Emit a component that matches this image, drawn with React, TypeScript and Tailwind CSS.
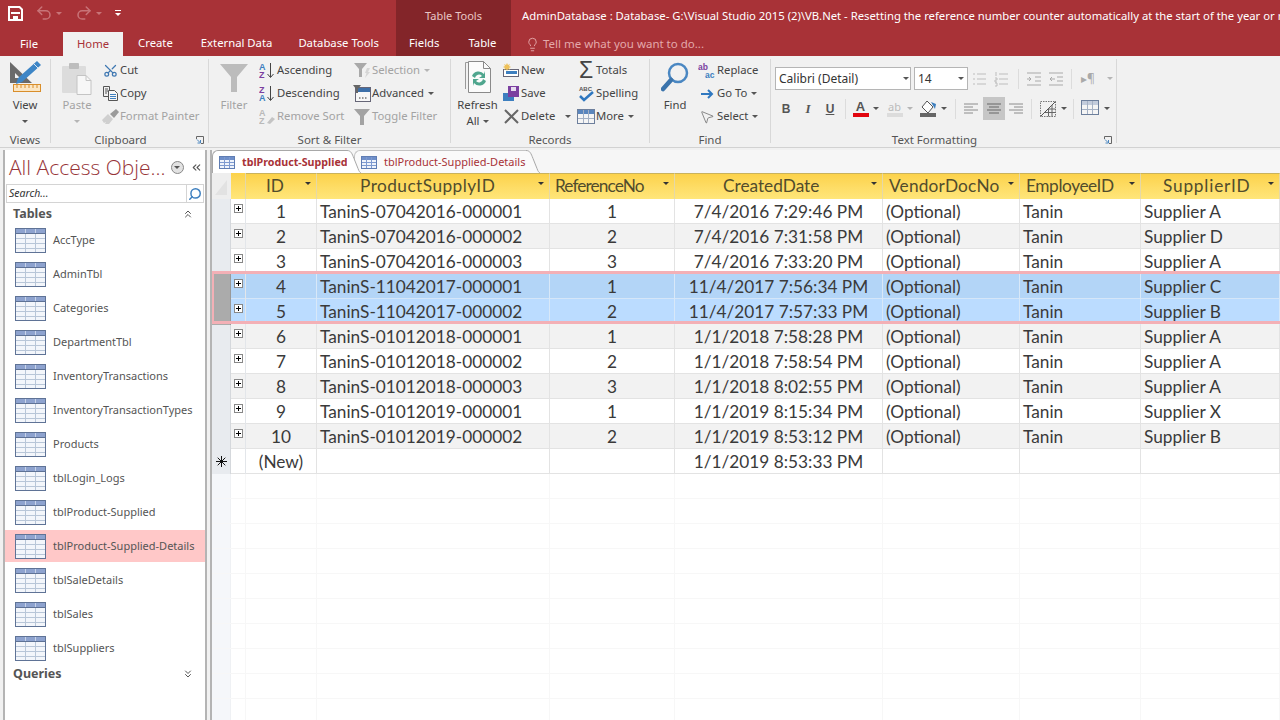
import React from "react";
import { ChevronsDown, ChevronsLeft, ChevronsUp, Lightbulb, MousePointer2, Redo2, Scissors, Search, Undo2 } from "lucide-react";

const rows = [
  ["1", "TaninS-07042016-000001", "1", "7/4/2016 7:29:46 PM", "Supplier A"],
  ["2", "TaninS-07042016-000002", "2", "7/4/2016 7:31:58 PM", "Supplier D"],
  ["3", "TaninS-07042016-000003", "3", "7/4/2016 7:33:20 PM", "Supplier A"],
  ["4", "TaninS-11042017-000001", "1", "11/4/2017 7:56:34 PM", "Supplier C"],
  ["5", "TaninS-11042017-000002", "2", "11/4/2017 7:57:33 PM", "Supplier B"],
  ["6", "TaninS-01012018-000001", "1", "1/1/2018 7:58:28 PM", "Supplier A"],
  ["7", "TaninS-01012018-000002", "2", "1/1/2018 7:58:54 PM", "Supplier A"],
  ["8", "TaninS-01012018-000003", "3", "1/1/2018 8:02:55 PM", "Supplier A"],
  ["9", "TaninS-01012019-000001", "1", "1/1/2019 8:15:34 PM", "Supplier X"],
  ["10", "TaninS-01012019-000002", "2", "1/1/2019 8:53:12 PM", "Supplier B"],
];

const tables = [
  "AccType",
  "AdminTbl",
  "Categories",
  "DepartmentTbl",
  "InventoryTransactions",
  "InventoryTransactionTypes",
  "Products",
  "tblLogin_Logs",
  "tblProduct-Supplied",
  "tblProduct-Supplied-Details",
  "tblSaleDetails",
  "tblSales",
  "tblSuppliers",
];

const headers = [
  { label: "ID", className: "pl-[20px]" },
  { label: "ProductSupplyID", className: "pl-[43px] tracking-[0.45px]" },
  { label: "ReferenceNo", className: "pl-[5px] tracking-[-0.9px]" },
  { label: "CreatedDate", className: "pl-[48px]" },
  { label: "VendorDocNo", className: "pl-[6px] tracking-[0.2px]" },
  { label: "EmployeeID", className: "pl-[6px] tracking-[-0.4px]" },
  { label: "SupplierID", className: "pl-[22px] tracking-[0.8px]" },
];

const gridCols = "grid grid-cols-[19px_15px_71px_233px_125px_208px_137px_121px_139px]";

function Caret({ faded }: { faded?: boolean }) {
  return (
    <span
      className={`inline-block w-0 h-0 border-x-[3px] border-t-[3px] border-x-transparent ${
        faded ? "border-t-[#b5b5b5]" : "border-t-[#555]"
      }`}
    />
  );
}

function TableIcon({ small }: { small?: boolean }) {
  if (small) {
    return (
      <svg width="16" height="13" viewBox="0 0 16 13" className="shrink-0">
        <rect x="0.5" y="0.5" width="15" height="12" fill="#eef3fb" stroke="#5f7db3" />
        <rect x="1" y="1" width="14" height="3" fill="#6f8fc9" />
        <path d="M1 6.5h14M1 9.5h14M5.5 1v11M10.5 1v11" stroke="#7d9ad0" strokeWidth="1" />
      </svg>
    );
  }
  return (
    <svg width="31" height="25" viewBox="0 0 31 25" className="shrink-0">
      <rect x="0.5" y="0.5" width="30" height="24" fill="#f3f6fb" stroke="#5f7396" />
      <rect x="1" y="1" width="29" height="4" fill="#8ea3cf" />
      <path d="M1 5.5h29" stroke="#5f7396" />
      <path d="M1 10.5h29M1 15.5h29M1 20.5h29M10.5 6v18M20.5 6v18" stroke="#b8c6d8" />
      <path d="M10.5 1v4M20.5 1v4" stroke="#c9d4e8" />
    </svg>
  );
}

function ViewIcon() {
  return (
    <svg width="32" height="32" viewBox="0 0 32 32">
      <path d="M1 1v21h22z" fill="#6a6a6a" />
      <path d="M6 12v5h5z" fill="#f1f1f1" />
      <path d="M8 20l4 0-3 2z M28 0l4 4-19 17-6 2 2-6z" fill="#3d85c6" />
      <path d="M25 3l4 4" stroke="#dce9f5" />
      <rect x="4.5" y="23.5" width="27" height="7" fill="#fbe6c4" stroke="#d98e2b" />
      <path d="M8 24v3M12 24v3M16 24v3M20 24v3M24 24v3M28 24v3" stroke="#d98e2b" />
    </svg>
  );
}

function PasteIcon() {
  return (
    <svg width="30" height="32" viewBox="0 0 30 32" className="mt-[2px]">
      <rect x="0" y="3" width="24" height="27" rx="1" fill="#dcdcdc" />
      <rect x="7" y="0" width="10" height="6" rx="1" fill="#bdbdbd" />
      <path d="M15 12.5h9l5 5v14H15z" fill="#f7f7f7" stroke="#c4c4c4" />
      <path d="M24 12.5v5h5" fill="none" stroke="#c4c4c4" />
    </svg>
  );
}

function CopyIcon() {
  return (
    <svg width="15" height="15" viewBox="0 0 15 15" fill="none" stroke="#555">
      <path d="M.5.5h6v10h-6zM2 3h3M2 5h3M2 7h2" />
      <path d="M5.5 4.5h6l3 3v7h-9z" fill="#f6f6f6" />
      <path d="M7 8.5h6M7 10.5h6M7 12.5h6" stroke="#3d7fbf" />
    </svg>
  );
}

function BrushIcon() {
  return (
    <svg width="17" height="15" viewBox="0 0 17 15">
      <path d="M0 11l6-6 5 5-4 5H3l1-2-2 1z" fill="#cfcfcf" />
      <path d="M8 5l6-5 3 3-5 6z" fill="#9a9a9a" />
    </svg>
  );
}

function Funnel({ color, w = 16 }: { color: string; w?: number }) {
  return (
    <svg width={w} height={w} viewBox="0 0 16 16">
      <path d="M0 0h16L10 7v9H6V7z" fill={color} />
    </svg>
  );
}

function BigFunnel() {
  return (
    <svg width="28" height="28" viewBox="0 0 28 28" className="mt-[3px]">
      <path d="M0 0h28L17 13v15h-6V13z" fill="#bcbcbc" />
    </svg>
  );
}

function SelectionIcon() {
  return (
    <svg width="17" height="16" viewBox="0 0 17 16">
      <path d="M0 0h13L8 6v8H5V6z" fill="#a9a9a9" />
      <path d="M13 5l3 0-2 4h2l-5 6 1.500-5h-1.500z" fill="#d6d6d6" />
    </svg>
  );
}

function AdvancedIcon() {
  return (
    <svg width="18" height="17" viewBox="0 0 18 17">
      <rect x="2.500" y="2.500" width="15" height="14" fill="#f7f7f7" stroke="#667" />
      <rect x="3" y="3" width="14" height="4" fill="#3d6fa8" />
      <path d="M6 13h1.500M9 13h1.500M12 13h1.500" stroke="#333" />
      <path d="M0 0h8L5 4v4H3V4z" fill="#666" />
    </svg>
  );
}

function SortIcon({ top, bottom, faded }: { top: string; bottom: string; faded?: boolean }) {
  const topColor = faded ? "#b9b9b9" : top === "A" ? "#3d7fbf" : "#7b3fa0";
  const bottomColor = faded ? "#b9b9b9" : top === "A" ? "#7b3fa0" : "#3d7fbf";
  return (
    <svg width="16" height="17" viewBox="0 0 16 17">
      <text x="0" y="7.5" fontSize="9" fontWeight="700" fontFamily="Liberation Sans" fill={topColor}>{top}</text>
      <text x="0" y="16" fontSize="9" fontWeight="700" fontFamily="Liberation Sans" fill={bottomColor}>{bottom}</text>
      {faded ? (
        <path d="M8 15l5-6 3 2-5 5z" fill="#c4c4c4" />
      ) : (
        <path d="M11.5 1v14M8.5 12l3 3.5 3-3.5" fill="none" stroke="#444" />
      )}
    </svg>
  );
}

function MiniTable({ header = "#7f9ccf" }: { header?: string }) {
  return (
    <svg width="18" height="15" viewBox="0 0 18 15">
      <rect x=".5" y=".5" width="17" height="14" fill="#f5f5f5" stroke="#6d7f9c" />
      <rect x="1" y="1" width="16" height="4" fill={header} />
      <path d="M1 9.5h16M6.5 1v13M11.5 1v13" stroke="#a5b1c4" />
    </svg>
  );
}

function SmallBtn({ icon, label, faded, caret }: { icon: React.ReactNode; label: string; faded?: boolean; caret?: boolean }) {
  return (
    <div className={`flex items-center h-[23px] whitespace-nowrap ${faded ? "text-[#a3a3a3]" : "text-[#444]"}`}>
      <span className="flex items-center justify-center shrink-0 w-[18px]">{icon}</span>
      <span className="ml-[1px]">{label}</span>
      {caret && (
        <span className="ml-[4px] flex">
          <Caret faded={faded} />
        </span>
      )}
    </div>
  );
}

function BigBtn({ icon, label, second, caret, faded, className }: { icon: React.ReactNode; label: string; second?: string; caret?: boolean; faded?: boolean; className: string }) {
  return (
    <div className={`flex flex-col items-center pt-[2px] shrink-0 ${faded ? "text-[#a3a3a3]" : "text-[#444]"} ${className}`}>
      <div className="h-[35px] flex items-start justify-center">{icon}</div>
      <div className="leading-[18px] whitespace-nowrap">{label}</div>
      <div className="h-[14px] flex items-center gap-[3px] leading-[16px]">
        {second}
        {caret && <Caret faded={faded} />}
      </div>
    </div>
  );
}

function Launcher() {
  return (
    <svg width="8" height="8" viewBox="0 0 8 8" className="absolute right-[4px] bottom-[-1px]" fill="none" stroke="#666">
      <path d="M.5 3V.5H7.5V7.5H5" />
      <path d="M1 3.5l3 3M4.5 4v3H1.5" stroke="#4a86c0" />
    </svg>
  );
}

function Group({ label, className, launcher, children }: { label: string; className: string; launcher?: boolean; children: React.ReactNode }) {
  return (
    <div className={`relative flex flex-col shrink-0 mt-[3px] mb-[4px] border-r border-[#d8d8d8] ${className}`}>
      <div className="flex-1 flex min-h-0">{children}</div>
      <div className={`h-[14px] text-center text-[11.5px] leading-[22px] text-[#555] ${launcher ? "pr-[18px]" : ""}`}>{label}</div>
      {launcher && <Launcher />}
    </div>
  );
}

function Lines({ d, color = "#8c8c8c" }: { d: string; color?: string }) {
  return (
    <svg width="16" height="16" viewBox="0 0 16 16" fill="none" stroke={color}>
      <path d={d} />
    </svg>
  );
}

function Separator({ className }: { className: string }) {
  return <span className={`w-px h-[20px] bg-[#dcdcdc] shrink-0 ${className}`} />;
}

function TextFormatting() {
  return (
    <div className="ml-[4px] pt-[8px] flex flex-col">
      <div className="flex items-center h-[23px]">
        <div className="w-[136px] h-[23px] bg-white border border-[#b5b5b5] flex items-center pl-[3px] pr-[1px] text-[12px] text-[#333]">
          <span className="flex-1">Calibri (Detail)</span>
          <Caret />
        </div>
        <div className="ml-[3px] w-[54px] h-[23px] bg-white border border-[#b5b5b5] flex items-center pl-[3px] pr-[3px] text-[12px] text-[#333]">
          <span className="flex-1">14</span>
          <Caret />
        </div>
        <span className="ml-[4px] flex"><Lines d="M5 3h9M5 8h9M5 13h9M1 3h2M1 8h2M1 13h2" color="#bdbdbd" /></span>
        <span className="ml-[6px] flex"><Lines d="M5 3h9M5 8h9M5 13h9M2 1v4M1 7h2v2H1v2h2M1 12h2v3H1" color="#bdbdbd" /></span>
        <Separator className="ml-[8px]" />
        <span className="ml-[7px] flex"><Lines d="M1 2h14M9 6h6M9 10h6M1 14h14M1 8h4M3 6l2 2-2 2" color="#a9a9a9" /></span>
        <span className="ml-[6px] flex"><Lines d="M1 2h14M9 6h6M9 10h6M1 14h14M2 8h5M4 6L2 8l2 2" color="#a9a9a9" /></span>
        <Separator className="ml-[7px]" />
        <span className="ml-[9px] text-[12px] text-[#a9a9a9] leading-none">▸¶</span>
        <span className="ml-[12px] flex"><Caret faded /></span>
      </div>
      <div className="flex items-center h-[23px] mt-[7px]">
        <span className="w-[22px] text-center text-[12px] font-bold text-[#555] font-['Liberation_Sans',sans-serif]">B</span>
        <span className="w-[22px] text-center text-[13px] italic font-bold text-[#555] font-['Liberation_Serif',serif]">I</span>
        <span className="w-[22px] text-center text-[12px] font-bold underline text-[#555] font-['Liberation_Sans',sans-serif]">U</span>
        <Separator className="ml-[4px]" />
        <span className="ml-[6px] w-[17px] flex flex-col items-center leading-none">
          <span className="text-[13px] font-bold text-[#555] leading-[13px] font-['Liberation_Sans',sans-serif]">A</span>
          <span className="w-[16px] h-[4px] bg-[#e2060f]" />
        </span>
        <span className="ml-[4px] flex"><Caret /></span>
        <span className="ml-[7px] w-[17px] flex flex-col items-center leading-none">
          <span className="text-[11px] text-[#bbb] leading-[13px]">ab</span>
          <span className="w-[16px] h-[4px] bg-[#dcdcdc]" />
        </span>
        <span className="ml-[4px] flex"><Caret faded /></span>
        <span className="ml-[7px] flex">
          <svg width="17" height="18" viewBox="0 0 17 18">
            <path d="M7 1l6 6-5 6-6-6z" fill="#fff" stroke="#555" />
            <path d="M11 2l5 2-1 5z" fill="#3d7fbf" />
            <rect x="0" y="13" width="16" height="4" fill="#666" />
          </svg>
        </span>
        <span className="ml-[4px] flex"><Caret /></span>
        <Separator className="ml-[8px]" />
        <span className="ml-[7px] flex"><Lines d="M1 3h14M1 6h9M1 9h14M1 12h9" /></span>
        <span className="ml-[4px] w-[22px] h-[23px] bg-[#c6c6c6] flex items-center justify-center"><Lines d="M1 3h14M3 6h10M1 9h14M3 12h10" color="#666" /></span>
        <span className="ml-[3px] flex"><Lines d="M1 3h14M6 6h9M1 9h14M6 12h9" /></span>
        <Separator className="ml-[7px]" />
        <span className="ml-[8px] flex">
          <svg width="16" height="16" viewBox="0 0 16 16" fill="none">
            <path d="M.5.5h15v15H.5z" stroke="#777" strokeDasharray="1.5 1" />
            <path d="M.5 15.5L15.5 .5" stroke="#555" />
            <path d="M8.5 8v7.5M12 4v11.5M5 11.5h10.5M8 8h7.5" stroke="#666" />
          </svg>
        </span>
        <span className="ml-[5px] flex"><Caret /></span>
        <Separator className="ml-[6px]" />
        <span className="ml-[7px] flex mb-[3px]"><MiniTable header="#c3ccdc" /></span>
        <span className="ml-[5px] flex"><Caret /></span>
      </div>
    </div>
  );
}

function Ribbon() {
  return (
    <div className="h-[92px] bg-[#f1f1f1] border-b border-[#d2d2d2] flex text-[11.3px] font-['Noto_Sans',sans-serif]">
      <Group label="Views" className="w-[51px]">
        <BigBtn icon={<ViewIcon />} label="View" caret className="w-[50px]" />
      </Group>
      <Group label="Clipboard" className="w-[158px]" launcher>
        <BigBtn icon={<PasteIcon />} label="Paste" caret faded className="ml-[8px] w-[36px]" />
        <div className="ml-[6px]">
          <SmallBtn icon={<Scissors size={15} className="text-[#3f78b2] -rotate-90" />} label="Cut" />
          <SmallBtn icon={<CopyIcon />} label="Copy" />
          <SmallBtn icon={<BrushIcon />} label="Format Painter" faded />
        </div>
      </Group>
      <Group label="Sort & Filter" className="w-[242px]">
        <BigBtn icon={<BigFunnel />} label="Filter" faded className="ml-[11px] w-[28px]" />
        <div className="ml-[10px] w-[95px]">
          <SmallBtn icon={<SortIcon top="A" bottom="Z" />} label="Ascending" />
          <SmallBtn icon={<SortIcon top="Z" bottom="A" />} label="Descending" />
          <SmallBtn icon={<SortIcon top="A" bottom="Z" faded />} label="Remove Sort" faded />
        </div>
        <div>
          <SmallBtn icon={<SelectionIcon />} label="Selection" faded caret />
          <SmallBtn icon={<AdvancedIcon />} label="Advanced" caret />
          <SmallBtn icon={<Funnel color="#a3a3a3" />} label="Toggle Filter" faded />
        </div>
      </Group>
      <Group label="Records" className="w-[199px]">
        <BigBtn
          icon={
            <svg width="26" height="32" viewBox="0 0 26 32">
              <path d="M.5 28V1.5h3" fill="none" stroke="#999" />
              <path d="M3.5.5h15l7 7v24h-22z" fill="#fbfbfb" stroke="#8a8a8a" />
              <path d="M18.5.5v7h7" fill="none" stroke="#8a8a8a" />
              <path d="M7 15a7 7 0 0 1 12-2l1-3v7h-6l3-2a4 4 0 0 0-7 2z" fill="#4fa68e" />
              <path d="M21 20a7 7 0 0 1-12 2l-1 3v-7h6l-3 2a4 4 0 0 0 7-2z" fill="#4fa68e" />
            </svg>
          }
          label="Refresh"
          second="All"
          caret
          className="ml-[5px] w-[43px]"
        />
        <div className="ml-[3px] w-[75px]">
          <SmallBtn
            icon={
              <svg width="17" height="15" viewBox="0 0 17 15">
                <rect x=".5" y="6.5" width="15" height="7" fill="#fff" stroke="#667" />
                <rect x="3" y="8" width="11" height="3" fill="#3d7fbf" />
                <path d="M4 0l1 2 2-1-1 2 2 1-2 1 1 2-2-1-1 2-1-2-2 1 1-2-2-1 2-1-1-2 2 1z" fill="#eec15a" />
              </svg>
            }
            label="New"
          />
          <SmallBtn
            icon={
              <svg width="16" height="16" viewBox="0 0 16 16">
                <rect x="0" y="7" width="11" height="8" fill="#3d7fbf" />
                <rect x="5" y="0" width="11" height="11" fill="#7b3fa0" />
                <rect x="8" y="1" width="5" height="4" fill="#e6dcef" />
              </svg>
            }
            label="Save"
          />
          <div className="flex items-center">
            <SmallBtn
              icon={
                <svg width="15" height="15" viewBox="0 0 15 15" stroke="#666" strokeWidth="2">
                  <path d="M1 1l13 13M14 1L1 14" />
                </svg>
              }
              label="Delete"
            />
            <span className="ml-[10px] flex"><Caret /></span>
          </div>
        </div>
        <div>
          <SmallBtn icon={<span className="text-[23px] leading-none text-[#444] font-['Liberation_Sans',sans-serif]">Σ</span>} label="Totals" />
          <SmallBtn
            icon={
              <svg width="16" height="17" viewBox="0 0 16 17">
                <text x="1" y="6" fontSize="6" fontWeight="700" fontFamily="Liberation Sans" fill="#555">ABC</text>
                <path d="M2 11l4 4 9-8" fill="none" stroke="#2f78c0" strokeWidth="2.5" />
              </svg>
            }
            label="Spelling"
          />
          <SmallBtn icon={<MiniTable header="#5b86bd" />} label="More" caret />
        </div>
      </Group>
      <Group label="Find" className="w-[121px]">
        <BigBtn
          icon={
            <svg width="28" height="30" viewBox="0 0 28 30" fill="none" className="mt-[1px]">
              <circle cx="17" cy="11" r="9" stroke="#4a87c2" strokeWidth="2.5" />
              <path d="M10 18L2 27" stroke="#3b74ac" strokeWidth="4.5" strokeLinecap="round" />
            </svg>
          }
          label="Find"
          className="ml-[10px] w-[30px]"
        />
        <div className="ml-[8px]">
          <SmallBtn
            icon={
              <svg width="18" height="16" viewBox="0 0 18 16" fontFamily="Liberation Sans" fontSize="8.5" fontWeight="700">
                <text x="0" y="7" fill="#7b3fa0">ab</text>
                <text x="7" y="15" fill="#3d7fbf">ac</text>
              </svg>
            }
            label="Replace"
          />
          <SmallBtn
            icon={
              <svg width="14" height="12" viewBox="0 0 14 12" fill="none" stroke="#2f78c0" strokeWidth="2">
                <path d="M1 6h11M8 2l4 4-4 4" />
              </svg>
            }
            label="Go To"
            caret
          />
          <SmallBtn icon={<MousePointer2 size={16} strokeWidth={1} className="text-[#555]" />} label="Select" caret />
        </div>
      </Group>
      <Group label="Text Formatting" className="w-[346px]" launcher>
        <TextFormatting />
      </Group>
    </div>
  );
}

function TitleBar() {
  const tabClass = "text-[11.3px] text-white whitespace-nowrap";
  return (
    <div className="h-[56px] bg-[#a83237] flex font-['Noto_Sans',sans-serif]">
      <div className="w-[396px] shrink-0 flex flex-col">
        <div className="h-[30px] flex items-center pl-[8px] pb-[6px] pt-[2px]">
          <svg width="15" height="15" viewBox="0 0 15 15" fill="none">
            <path d="M1 1h10.500L14 3.500V14H1z" stroke="#fff" strokeWidth="2" />
            <rect x="3" y="6" width="9" height="2" fill="#fff" />
            <rect x="5" y="10" width="5" height="4" fill="#fff" />
          </svg>
          <Undo2 size={18} className="ml-[12px] text-[#c87478]" />
          <span className="ml-[3px] flex"><span className="w-0 h-0 border-x-[3px] border-t-[3px] border-x-transparent border-t-[#c87478]" /></span>
          <Redo2 size={18} className="ml-[13px] text-[#c87478]" />
          <span className="ml-[3px] flex"><span className="w-0 h-0 border-x-[3px] border-t-[3px] border-x-transparent border-t-[#c87478]" /></span>
          <span className="ml-[13px] flex flex-col items-center gap-[2px]">
            <span className="w-[6px] h-px bg-white" />
            <span className="w-0 h-0 border-x-[3px] border-t-[3px] border-x-transparent border-t-white" />
          </span>
        </div>
        <div className="h-[26px] flex items-end">
          <span className={`${tabClass} ml-[20px] mb-[3px]`}>File</span>
          <span className="ml-[25px] w-[60px] h-[24px] bg-[#f1f1f1] text-[11.3px] text-[#a83237] flex items-center justify-center">Home</span>
          <span className={`${tabClass} ml-[15px] mb-[4px]`}>Create</span>
          <span className={`${tabClass} ml-[28px] mb-[4px]`}>External Data</span>
          <span className={`${tabClass} ml-[26px] mb-[4px]`}>Database Tools</span>
        </div>
      </div>
      <div className="w-[115px] shrink-0 bg-[#832529] flex flex-col">
        <div className="h-[30px] flex items-center justify-center pt-[3px] text-[11px] text-[#e9c5c6]">Table Tools</div>
        <div className="h-[26px] flex items-end">
          <span className={`${tabClass} ml-[13px] mb-[4px]`}>Fields</span>
          <span className={`${tabClass} ml-[29px] mb-[4px]`}>Table</span>
        </div>
      </div>
      <div className="flex-1 min-w-0 overflow-hidden flex flex-col">
        <div className="h-[30px] flex items-center pl-[11px] pt-[3px] text-[11.3px] text-white whitespace-nowrap">
          AdminDatabase : Database- G:\Visual Studio 2015 (2)\VB.Net - Resetting the reference number counter automatically at the start of the year or month
        </div>
        <div className="h-[26px] flex items-center pl-[14px] pt-[2px] text-[11.5px] text-[#e4a9ab]">
          <Lightbulb size={15} strokeWidth={1.5} />
          <span className="ml-[3px]">Tell me what you want to do...</span>
        </div>
      </div>
    </div>
  );
}

function NavPane() {
  return (
    <div className="ml-[3px] w-[204px] shrink-0 bg-white border-x-2 border-[#b4b4b4] flex flex-col overflow-hidden font-['Noto_Sans',sans-serif]">
      <div className="h-[34px] flex items-center pl-[4px]">
        <span className="text-[21px] leading-none text-[#973438] whitespace-nowrap font-['Open_Sans',sans-serif] font-light">All Access Obje...</span>
        <span className="ml-[5px] w-[13px] h-[13px] rounded-full border border-[#888] bg-[#e2e2e2] flex items-center justify-center">
          <Caret />
        </span>
        <ChevronsLeft size={13} className="ml-[6px] text-[#555]" />
      </div>
      <div className="mx-[1px] h-[19px] border border-[#d4d4d4] flex items-center">
        <span className="flex-1 pl-[2px] text-[10.5px] italic text-[#333]">Search...</span>
        <span className="w-[17px] h-full border-l border-[#d4d4d4] flex items-center justify-center">
          <Search size={14} strokeWidth={2.5} className="text-[#3d7fbf] -scale-x-100" />
        </span>
      </div>
      <div className="h-[20px] flex items-center pt-[2px] pl-[8px] pr-[11px] text-[12.5px] font-bold text-[#555]">
        <span className="flex-1">Tables</span>
        <ChevronsUp size={12} className="text-[#555]" />
      </div>
      {tables.map((name) => (
        <div key={name} className="h-[34px] py-px">
          <div className={`h-[32px] flex items-center pl-[10px] text-[11px] text-[#555] whitespace-nowrap ${name === "tblProduct-Supplied-Details" ? "bg-[#ffc8c8]" : ""}`}>
            <TableIcon />
            <span className="ml-[7px]">{name}</span>
          </div>
        </div>
      ))}
      <div className="h-[17px] flex items-center pt-[1px] pl-[8px] pr-[11px] text-[12.5px] font-bold text-[#555]">
        <span className="flex-1">Queries</span>
        <ChevronsDown size={12} className="text-[#555]" />
      </div>
    </div>
  );
}

function TabTail({ active }: { active?: boolean }) {
  return (
    <svg width="14" height="23" viewBox="0 0 14 23" className="shrink-0">
      <path d="M0 .5c4 0 5 3 7 8l4 10c1 3 2 4 3 4.500H0z" fill={active ? "#fff" : "#fafafa"} />
      <path d="M0 .5c4 0 5 3 7 8l4 10c1 3 2 4 3 4.500" fill="none" stroke="#a8a8a8" />
    </svg>
  );
}

function TabStrip() {
  return (
    <div className="h-[23px] flex bg-[#f6f6f6] font-['Noto_Sans',sans-serif] text-[11px] text-[#a83237]">
      <div className="relative z-10 flex">
        <div className="w-[135px] bg-white rounded-tl-[6px] border-t border-l border-[#a8a8a8] flex items-center pl-[6px] text-[10.7px] font-bold whitespace-nowrap">
          <TableIcon small />
          <span className="ml-[7px]">tblProduct-Supplied</span>
        </div>
        <TabTail active />
      </div>
      <div className="ml-[-7px] flex">
        <div className="w-[172px] bg-[#fafafa] rounded-tl-[6px] border-t border-l border-[#c4c4c4] flex items-center pl-[6px] whitespace-nowrap">
          <TableIcon small />
          <span className="ml-[7px]">tblProduct-Supplied-Details</span>
        </div>
        <TabTail />
      </div>
    </div>
  );
}

function HeaderCell({ label, className }: { label: string; className: string }) {
  return (
    <div className="h-[26px] flex items-center pb-[2px] border-t border-r border-[#e5d8a8] border-t-[#c9b25c] relative bg-linear-to-b from-[#fcd24a] to-[#ffe67a]">
      <span className={`whitespace-nowrap text-[#514c2c] ${className}`}>{label}</span>
      <span className="absolute right-[5px] top-[8px] flex">
        <span className="w-0 h-0 border-x-[3px] border-t-[3px] border-x-transparent border-t-[#333]" />
      </span>
    </div>
  );
}

function Expander() {
  return (
    <div className="flex justify-center pt-[5px] border-r border-[#e3e6ea]">
      <span className="w-[9px] h-[9px] border border-[#888] bg-white flex items-center justify-center relative">
        <span className="absolute w-[5px] h-px bg-black" />
        <span className="absolute w-px h-[5px] bg-black" />
      </span>
    </div>
  );
}

function DataRow({ row, index }: { row: string[]; index: number }) {
  const selected = index === 3 || index === 4;
  let bg = index % 2 === 1 ? "bg-[#f2f2f2]" : "bg-white";
  if (index === 3) bg = "bg-[#b3d5f7]";
  if (index === 4) bg = "bg-[#bbdcff]";
  const cell = `flex items-center border-r ${selected ? "border-[#d8e8f8]" : "border-[#e3e3e3]"}`;
  return (
    <div className={`${gridCols} h-[25px] border-b ${selected ? "border-[#d5e6f8]" : "border-[#e3e3e3]"} ${bg}`}>
      <div className={selected ? "bg-[#ababab] border-r border-[#999]" : "bg-[#e8ebef] border-r border-[#d5d8dc]"} />
      <Expander />
      <div className={`${cell} justify-center`}>{row[0]}</div>
      <div className={`${cell} pl-[3px]`}>{row[1]}</div>
      <div className={`${cell} justify-center`}>{row[2]}</div>
      <div className={`${cell} justify-center`}>{row[3]}</div>
      <div className={`${cell} pl-[3px]`}>(Optional)</div>
      <div className={`${cell} pl-[3px]`}>Tanin</div>
      <div className={`${cell} pl-[3px]`}>{row[4]}</div>
    </div>
  );
}

function EmptyRow() {
  return (
    <div className={`${gridCols} h-[25px] border-b border-[#f7f7f7]`}>
      <div className="bg-[#f5f7fa] border-r border-[#eff1f4]" />
      {[0, 1, 2, 3, 4, 5, 6, 7].map((i) => (
        <div key={i} className="border-r border-[#f7f7f7]" />
      ))}
    </div>
  );
}

function Datasheet() {
  return (
    <div className="flex-1 min-w-0 bg-white border-l-2 border-[#b4b4b4] flex flex-col overflow-hidden">
      <TabStrip />
      <div className="w-[1068px] text-[17.25px] text-[#3a3a3a] font-['Lato',sans-serif]">
        <div className={gridCols}>
          <div className="h-[26px] bg-[#eeeeee] flex items-end">
            <svg width="18" height="24" viewBox="0 0 18 24">
              <path d="M15 5v15H3z" fill="#e2e2e2" />
            </svg>
          </div>
          <div className="h-[26px] border-r border-[#e5d8a8] bg-linear-to-b from-[#fcd24a] to-[#ffe67a]" />
          {headers.map((h) => (
            <HeaderCell key={h.label} label={h.label} className={h.className} />
          ))}
        </div>
        {rows.slice(0, 3).map((row, i) => (
          <DataRow key={row[0]} row={row} index={i} />
        ))}
        <div className="relative">
          {rows.slice(3, 5).map((row, i) => (
            <DataRow key={row[0]} row={row} index={i + 3} />
          ))}
          {/* pink selection frame drawn over the two rows */}
          <div className="absolute -top-[3px] bottom-0 inset-x-0 border-y-[3px] border-l-2 border-[#f3b0b6] pointer-events-none" />
        </div>
        {rows.slice(5).map((row, i) => (
          <DataRow key={row[0]} row={row} index={i + 5} />
        ))}
        <div className={`${gridCols} h-[25px] border-b border-[#e3e3e3] bg-white`}>
          <div className="bg-[#e8ebef] border-r border-[#d5d8dc] flex items-center justify-center">
            <svg width="11" height="11" viewBox="0 0 11 11" stroke="#111" strokeWidth="1">
              <path d="M5.500 0v11M0 5.500h11M1.700 1.700l7.600 7.600M9.300 1.700L1.700 9.300" />
            </svg>
          </div>
          <div className="border-r border-[#e3e6ea]" />
          <div className="flex items-center justify-center border-r border-[#e3e3e3]">(New)</div>
          <div className="border-r border-[#e3e3e3]" />
          <div className="border-r border-[#e3e3e3]" />
          <div className="flex items-center justify-center border-r border-[#e3e3e3]">1/1/2019 8:53:33 PM</div>
          <div className="border-r border-[#e3e3e3]" />
          <div className="border-r border-[#e3e3e3]" />
          <div className="border-r border-[#e3e3e3]" />
        </div>
        {[0, 1, 2, 3, 4, 5, 6, 7, 8, 9].map((i) => (
          <EmptyRow key={i} />
        ))}
      </div>
    </div>
  );
}

export default function App() {
  return (
    <div className="w-[1280px] h-[720px] overflow-hidden bg-[#f1f1f1] flex flex-col">
      <TitleBar />
      <Ribbon />
      <div className="flex-1 min-h-0 flex pt-[2px]">
        <NavPane />
        <div className="w-[3px] shrink-0" />
        <Datasheet />
      </div>
    </div>
  );
}
